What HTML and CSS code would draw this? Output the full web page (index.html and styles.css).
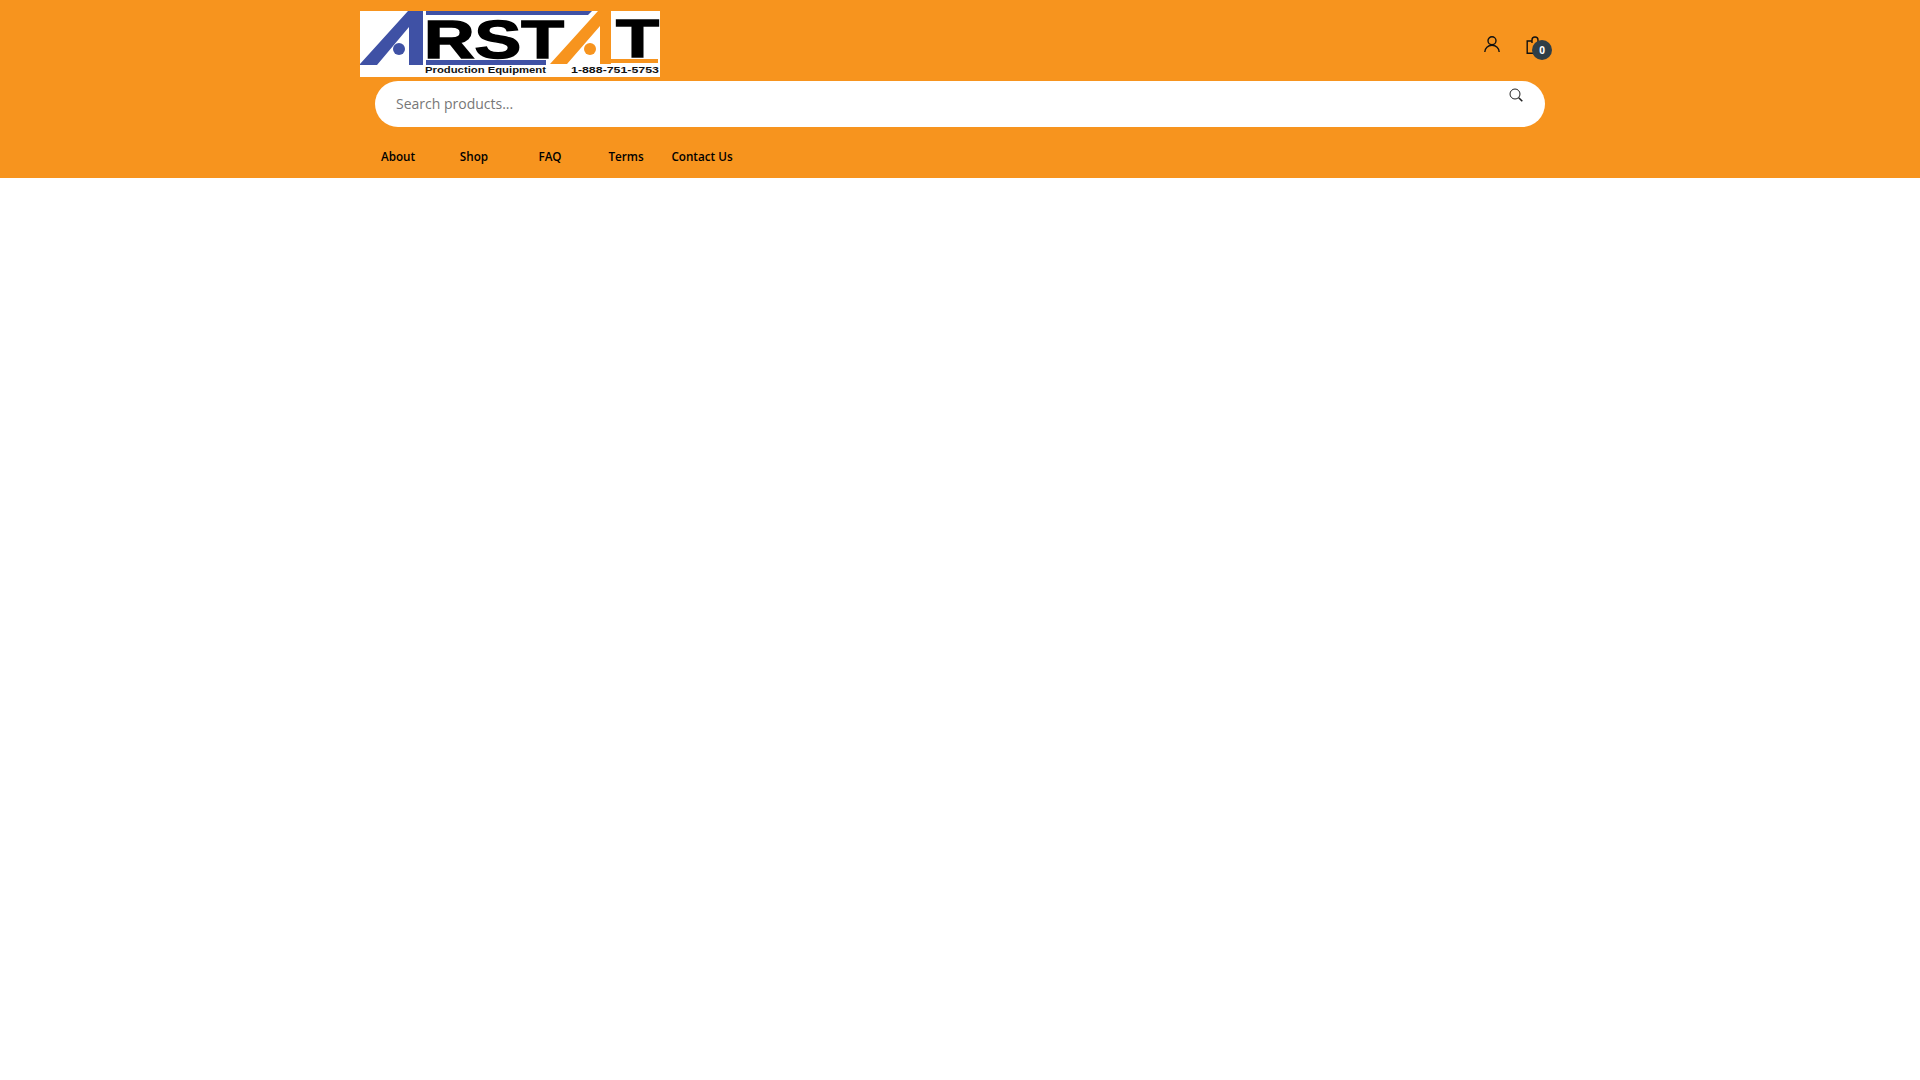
FILE: index.html
```html
<!DOCTYPE html>
<html lang="en">
<head>
  <meta charset="UTF-8" />
  <title>Arstat Production Equipment</title>
  <link rel="stylesheet" href="styles.css">
</head>
<body>
  <header class="site-header">
    <div class="header-inner">
      <div class="top-row">
        <a class="logo" href="#" aria-label="Arstat">
          <svg width="300" height="66" viewBox="0 0 300 66">
            <rect width="300" height="66" fill="#fff"/>
            <polygon points="0,53 48,0 63,0 63,54 49,54 49,16 17,54 0,54" fill="#3f51a5"/>
            <circle cx="39" cy="38" r="6" fill="#3f51a5"/>
            <polygon points="66,0 232,0 228,4 66,4" fill="#3f51a5"/>
            <rect x="66" y="49" width="120" height="5" fill="#3f51a5"/>
            <text class="logo-big" x="64" y="46.500" textLength="140" lengthAdjust="spacingAndGlyphs">RST</text>
            <polygon points="190,53 238,0 251,0 251,53 240,53 240,15 207,53 190,53" fill="#f7941e"/>
            <circle cx="230" cy="38" r="6" fill="#f7941e"/>
            <rect x="251" y="48" width="47" height="4" fill="#f7941e"/>
            <text class="logo-big" x="256" y="45.500" textLength="43" lengthAdjust="spacingAndGlyphs">T</text>
            <text class="logo-small" x="65" y="62" textLength="121" lengthAdjust="spacingAndGlyphs">Production Equipment</text>
            <text class="logo-small" x="211" y="62" textLength="88" lengthAdjust="spacingAndGlyphs">1-888-751-5753</text>
          </svg>
        </a>
        <div class="header-icons">
          <a class="icon-link" href="#" aria-label="Account">
            <svg width="16" height="16" viewBox="0 0 16 16" fill="none" stroke="#111" stroke-width="1.4">
              <circle cx="8" cy="4.800" r="4"/>
              <path d="M.8 16c0-4 3.200-6.700 7.200-6.700s7.200 2.700 7.200 6.700"/>
            </svg>
          </a>
          <a class="icon-link cart" href="#" aria-label="Cart">
            <svg width="18" height="18" viewBox="0 0 18 18" fill="none" stroke="#111" stroke-width="1.400">
              <path d="M6 5H1.200v12.300H16"/>
              <path d="M6 7V4a3 3 0 0 1 6 0v4"/>
            </svg>
            <span class="cart-count">0</span>
          </a>
        </div>
      </div>
      <form class="search-bar">
        <input class="search-input" type="text" placeholder="Search products...">
        <button class="search-btn" type="button" aria-label="Search">
          <svg width="14" height="14" viewBox="0 0 14 14" fill="none" stroke="#222" stroke-width="1">
            <circle cx="6" cy="6" r="5"/>
            <path d="M9.700 9.700l3.600 3.600" stroke-width="1.600"/>
          </svg>
        </button>
      </form>
      <nav class="main-nav">
        <a href="#">About</a>
        <a href="#">Shop</a>
        <a href="#">FAQ</a>
        <a href="#">Terms</a>
        <a href="#">Contact Us</a>
      </nav>
    </div>
  </header>
</body>
</html>
```

FILE: styles.css
```css
body {
  margin: 0;
  padding: 0;
  background: #fff;
  font-family: 'Open Sans', sans-serif;
}
.site-header {
  background-color: #f7941e;
  height: 178px;
}
.header-inner {
  width: 1200px;
  margin: 0 auto;
  padding-top: 11px;
}
.top-row {
  display: flex;
  justify-content: space-between;
  height: 70px;
}
.logo {
  display: block;
  height: 66px;
}
.logo svg {
  display: block;
  overflow: visible;
}
.logo-big {
  font-family: 'Liberation Sans', sans-serif;
  font-weight: 700;
  font-size: 54px;
  fill: #000;
  stroke: #000;
  stroke-width: 1.5px;
}
.logo-small {
  font-family: 'Liberation Sans', sans-serif;
  font-weight: 700;
  font-size: 9.5px;
  fill: #111;
}
.header-icons {
  display: flex;
  gap: 26px;
  padding-top: 25px;
  margin-right: 16px;
}
.icon-link {
  display: block;
  position: relative;
  height: 18px;
}
.icon-link svg {
  display: block;
}
.cart-count {
  position: absolute;
  top: 4px;
  left: 6px;
  width: 20px;
  height: 20px;
  border-radius: 50%;
  background: #2f3e46;
  color: #fff;
  font-size: 10px;
  font-weight: 700;
  line-height: 20px;
  text-align: center;
}
.search-bar {
  display: flex;
  align-items: flex-start;
  width: 1170px;
  height: 46px;
  margin-left: 15px;
  background: #fff;
  border-radius: 23px;
  box-sizing: border-box;
  padding: 0 20px 0 21px;
}
.search-input {
  flex: 1;
  height: 44px;
  border: none;
  outline: none;
  padding: 0;
  background: transparent;
  font-family: inherit;
  font-size: 14px;
}
.search-input::placeholder {
  color: #777;
  opacity: 1;
}
.search-btn {
  background: transparent;
  border: none;
  padding: 0;
  margin: 7px 2px 0 0;
  width: 14px;
  height: 14px;
  display: flex;
}
.main-nav {
  display: flex;
  align-items: center;
  height: 51px;
  margin-top: 3px;
  font-size: 11.7px;
  font-weight: 600;
}
.main-nav a {
  color: #000;
  text-decoration: none;
  width: 76px;
  text-align: center;
}
```
